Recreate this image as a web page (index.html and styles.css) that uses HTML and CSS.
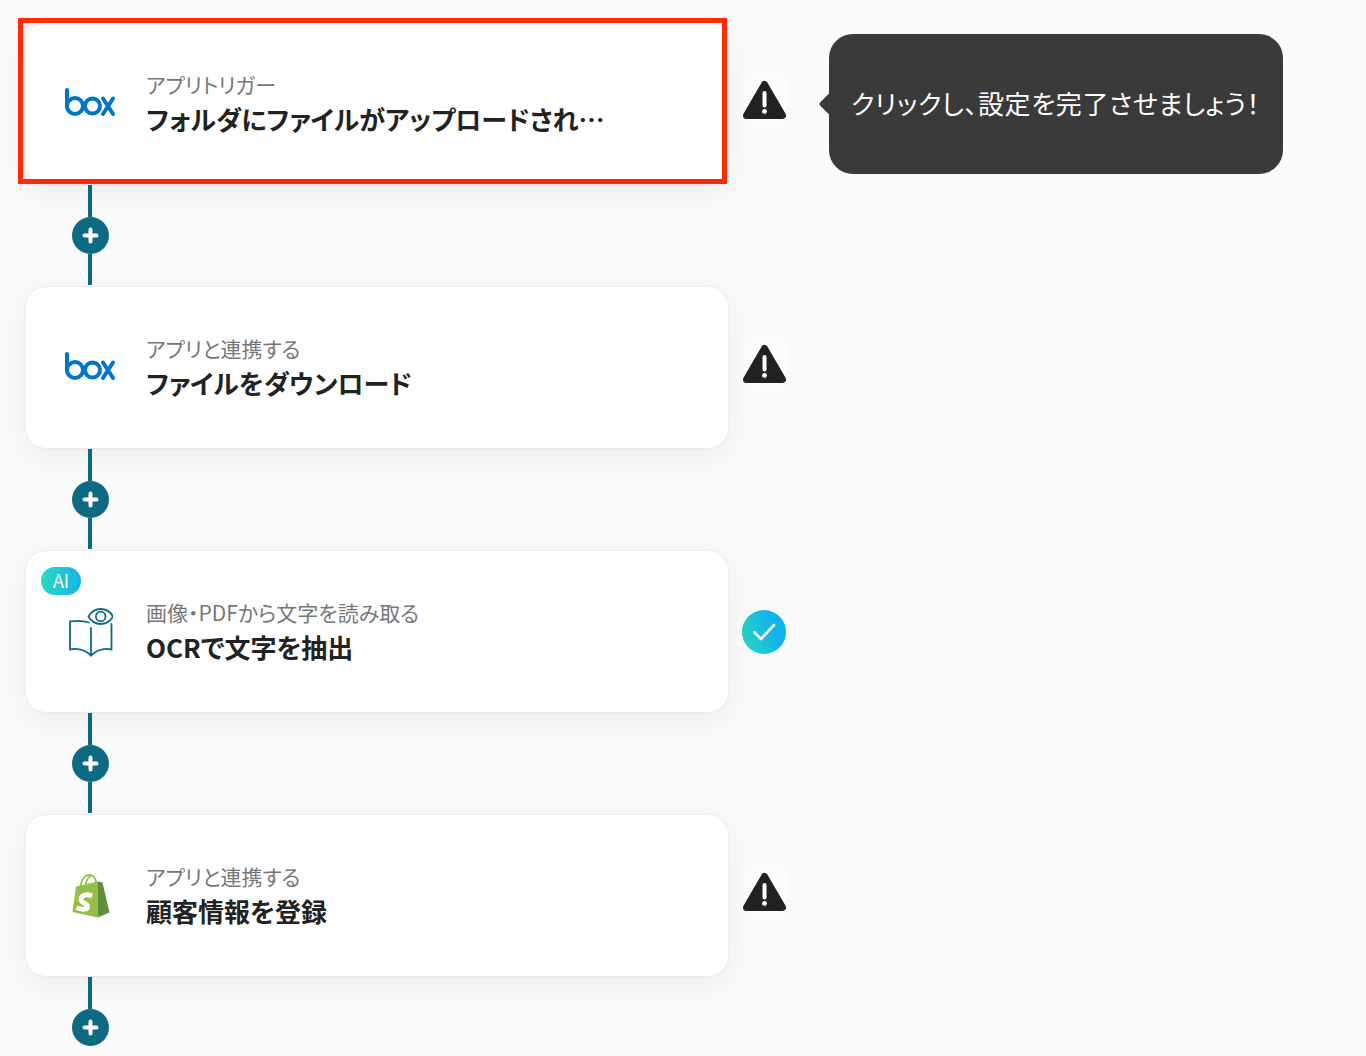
FILE: index.html
```html
<!DOCTYPE html>
<html lang="ja">
<head>
    <meta charset="UTF-8">
    <meta name="viewport" content="width=device-width, initial-scale=1.0">
    <title>フローボット</title>
    <link rel="stylesheet" href="styles.css">
</head>
<body>

    <svg class="defs" width="0" height="0" aria-hidden="true">
        <symbol id="box-logo" viewBox="0 0 54 32">
            <g fill="none" stroke="#0075c9" stroke-width="4" stroke-linecap="round">
                <path d="M4 4V20"/>
                <circle cx="12" cy="20" r="8"/>
                <circle cx="29.5" cy="20" r="7.5"/>
                <path d="M40 12.5L50 28M50 12.5L40 28"/>
            </g>
        </symbol>
        <symbol id="warning" viewBox="0 0 44 44">
            <path d="M21.5 6.5L39.5 37.5H3.5Z" fill="#222" stroke="#222" stroke-width="7" stroke-linejoin="round"/>
            <path d="M21.5 15V27.5" stroke="#fff" stroke-width="4" stroke-linecap="round"/>
            <circle cx="21.5" cy="33.5" r="2.4" fill="#fff"/>
        </symbol>
        <symbol id="plus" viewBox="0 0 37 37">
            <path d="M18.5 12.5V24.5M12.5 18.5H24.5" stroke="#fff" stroke-width="4" stroke-linecap="round"/>
        </symbol>
    </svg>

    <div class="flow">

        <div class="step">
            <div class="card">
                <div class="card-icon"><svg class="box-logo"><use href="#box-logo"/></svg></div>
                <div class="card-text">
                    <div class="card-label">アプリトリガー</div>
                    <div class="card-title">フォルダにファイルがアップロードされ…</div>
                </div>
                <div class="highlight"></div>
            </div>
            <svg class="warning"><use href="#warning"/></svg>
            <div class="tooltip">クリックし、設定を完了させましょう！</div>
        </div>

        <div class="connector">
            <div class="line"></div>
            <svg class="plus"><use href="#plus"/></svg>
            <div class="line"></div>
        </div>

        <div class="step">
            <div class="card">
                <div class="card-icon"><svg class="box-logo"><use href="#box-logo"/></svg></div>
                <div class="card-text">
                    <div class="card-label">アプリと連携する</div>
                    <div class="card-title">ファイルをダウンロード</div>
                </div>
            </div>
            <svg class="warning"><use href="#warning"/></svg>
        </div>

        <div class="connector">
            <div class="line"></div>
            <svg class="plus"><use href="#plus"/></svg>
            <div class="line"></div>
        </div>

        <div class="step">
            <div class="card">
                <span class="ai-badge">AI</span>
                <div class="card-icon">
                    <svg class="book" viewBox="0 0 44 50" fill="none" stroke="#0e6a82" stroke-width="1.8" stroke-linejoin="round" stroke-linecap="round">
                        <path d="M20 15.5C14 13.5 7 13.5 1 14.5V42.5C8 41 16 43 22 48.5C28 43 36 41 42.5 42.5V17"/>
                        <path d="M22 21V48.5"/>
                        <path d="M19.5 9.5C25 -0.5 38.5 -0.5 44 9.5C38.5 19.5 25 19.5 19.5 9.5Z"/>
                        <circle cx="31.7" cy="9.5" r="4.8"/>
                    </svg>
                </div>
                <div class="card-text">
                    <div class="card-label">画像・PDFから文字を読み取る</div>
                    <div class="card-title">OCRで文字を抽出</div>
                </div>
            </div>
            <div class="check">
                <svg viewBox="0 0 24 24" width="24" height="24" fill="none" stroke="#fff" stroke-width="2.6" stroke-linecap="round" stroke-linejoin="round">
                    <path d="M2.5 12.5L9 19L22 5"/>
                </svg>
            </div>
        </div>

        <div class="connector">
            <div class="line"></div>
            <svg class="plus"><use href="#plus"/></svg>
            <div class="line"></div>
        </div>

        <div class="step">
            <div class="card">
                <div class="card-icon">
                    <svg class="shopify" viewBox="0 0 40 46">
                        <path d="M2.5 39L6 13.5L27.5 8.5V44.5Z" fill="#95bf47"/>
                        <path d="M27.5 8.5L32.5 9.5L39.5 39.5L27.5 44.5Z" fill="#5e8e3e"/>
                        <path d="M10.5 13C11.5 6 15.5 1.5 19.5 1.8C23.5 2.1 25.5 5 26 9M15.5 11.5C16.5 6.5 18.5 3.5 21.5 3" fill="none" stroke="#95bf47" stroke-width="1.7"/>
                        <path d="M22 23C17 20.5 11 22 11 26.5C11 30.5 17.5 30 17.5 33.5C17.5 37 11 37 6.5 34.5" fill="none" stroke="#fff" stroke-width="4.8"/>
                    </svg>
                </div>
                <div class="card-text">
                    <div class="card-label">アプリと連携する</div>
                    <div class="card-title">顧客情報を登録</div>
                </div>
            </div>
            <svg class="warning"><use href="#warning"/></svg>
        </div>

        <div class="connector">
            <div class="line"></div>
            <svg class="plus"><use href="#plus"/></svg>
            <div class="line line-end"></div>
        </div>

    </div>

</body>
</html>
```

FILE: styles.css
```css
body {
    margin: 0;
    height: 1056px;
    overflow: hidden;
    background-color: #fafafa;
    color: #222;
    font-family: "Noto Sans CJK JP", "Noto Sans", sans-serif;
    font-feature-settings: "palt";
}
.defs {
    display: block;
}
.flow {
    display: flex;
    flex-direction: column;
    padding: 23px 0 0 26px;
}
.step {
    display: flex;
    align-items: center;
    height: 161px;
}
.card {
    position: relative;
    display: flex;
    align-items: center;
    box-sizing: border-box;
    width: 702px;
    height: 161px;
    padding-left: 32px;
    gap: 24px;
    background-color: #fff;
    border-radius: 20px;
    box-shadow: 0 0 2px rgba(0, 0, 0, 0.1), 0 8px 32px rgba(0, 0, 0, 0.06);
}
.card-icon {
    display: flex;
    justify-content: center;
    align-items: center;
    flex: none;
    width: 64px;
}
.box-logo {
    display: block;
    width: 54px;
    height: 32px;
    margin-bottom: 4px;
}
.book {
    display: block;
    width: 44px;
    height: 50px;
    margin-left: 1px;
}
.shopify {
    display: block;
    width: 40px;
    height: 46px;
}
.card-text {
    width: 470px;
}
.card-label {
    font-size: 21px;
    line-height: 30px;
    color: #777;
}
.card-title {
    font-size: 26px;
    line-height: 40px;
    font-weight: 700;
    white-space: nowrap;
}
.highlight {
    position: absolute;
    top: -5px;
    left: -8px;
    right: 1px;
    bottom: 0;
    border: 5px solid #ff2a00;
}
.ai-badge {
    position: absolute;
    top: 16px;
    left: 15px;
    width: 40px;
    height: 28px;
    border-radius: 14px;
    background: linear-gradient(90deg, #2bd9c0, #14b4e8);
    color: #fff;
    font-size: 18px;
    line-height: 27px;
    text-align: center;
}
.warning {
    flex: none;
    width: 44px;
    height: 44px;
    margin: 0 0 8px 15px;
    background-color: rgba(255, 255, 255, 0.4);
}
.check {
    display: flex;
    justify-content: center;
    align-items: center;
    flex: none;
    width: 44px;
    height: 44px;
    margin-left: 14px;
    border-radius: 50%;
    background: linear-gradient(70deg, #2bd9c0, #12b3ea 70%);
}
.tooltip {
    position: relative;
    display: flex;
    align-items: center;
    box-sizing: border-box;
    width: 454px;
    height: 140px;
    margin-left: 42px;
    padding: 0 0 2px 22px;
    background-color: #3a3a3a;
    border-radius: 24px;
    color: #fff;
    font-size: 26px;
    letter-spacing: 0.6px;
    white-space: nowrap;
}
.tooltip::before {
    content: "";
    position: absolute;
    top: 62px;
    left: -7px;
    width: 16px;
    height: 16px;
    background-color: #3a3a3a;
    border-radius: 2px;
    transform: rotate(45deg);
}
.connector {
    display: flex;
    flex-direction: column;
    align-items: center;
    box-sizing: border-box;
    width: 37px;
    height: 103px;
    margin-left: 46px;
    padding: 1px 0 2px;
}
.line {
    flex: 1;
    width: 4px;
    margin-right: 1px;
    background-color: #0e6a82;
}
.line-end {
    background-color: transparent;
}
.plus {
    flex: none;
    width: 37px;
    height: 37px;
    border-radius: 50%;
    background-color: #0e6a82;
}
```
